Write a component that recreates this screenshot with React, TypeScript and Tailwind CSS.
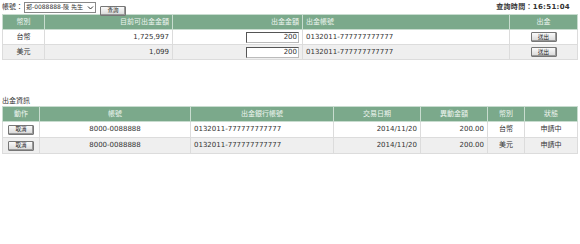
import React from "react";

const F = { fontFamily: '"DejaVu Sans", "Noto Sans CJK TC", sans-serif' };

function Btn({ label }: { label: string }) {
  return (
    <span className="inline-flex items-center justify-center w-[26px] h-[10px] border border-[#777] bg-gradient-to-b from-[#fafafa] to-[#d8d8d8] text-[5.5px] text-[#222] leading-none rounded-[1px] shadow-[inset_-1px_-1px_0_#999]">
      {label}
    </span>
  );
}

const th = "h-[15px] px-[3px] font-normal text-[7px] text-[#eef5f0] border border-[#c8dccf] bg-[#7ba98b]";
const td = "h-[15px] px-[3px] text-[7px] text-[#333] border border-[#dcdcdc]";

export default function App() {
  return (
    <div className="w-[580px] h-[244px] bg-white relative" style={F}>
      <div className="flex items-center h-[14px] px-[2px]">
        <span className="text-[7px] text-[#333]">帳號：</span>
        <span className="ml-[1px] flex items-center w-[72px] h-[11px] border border-[#888] bg-white text-[6px] text-[#333] leading-none pl-[1px]">
          <span className="flex-1 whitespace-nowrap overflow-hidden">郑-0088888-陳 先生</span>
          <svg width="7" height="7" viewBox="0 0 7 7" className="mr-[1px]">
            <path d="M1 2.5 L3.5 5 L6 2.5" stroke="#333" strokeWidth="1" fill="none" />
          </svg>
        </span>
        <span className="ml-[4px]">
          <Btn label="查詢" />
        </span>
        <span className="ml-auto mr-[8px] text-[7px] font-bold text-[#333] tracking-[0.3px]">查詢時間：16:51:04</span>
      </div>

      <table className="ml-[2px] w-[575px] table-fixed border-collapse">
        <colgroup>
          <col className="w-[42px]" />
          <col className="w-[128px]" />
          <col className="w-[130px]" />
          <col className="w-[207px]" />
          <col className="w-[68px]" />
        </colgroup>
        <thead>
          <tr>
            <th className={th + " text-center"}>幣別</th>
            <th className={th + " text-right"}>目前可出金金額</th>
            <th className={th + " text-right"}>出金金額</th>
            <th className={th + " text-left"}>出金帳號</th>
            <th className={th + " text-center"}>出金</th>
          </tr>
        </thead>
        <tbody>
          {[
            { c: "台幣", a: "1,725,997", bg: "bg-white" },
            { c: "美元", a: "1,099", bg: "bg-[#efefef]" },
          ].map((r) => (
            <tr key={r.c} className={r.bg}>
              <td className={td + " text-center"}>{r.c}</td>
              <td className={td + " text-right"}>{r.a}</td>
              <td className={td + " text-right"}>
                <span className="inline-block w-[53px] h-[11px] border border-[#555] border-r-[#bbb] border-b-[#bbb] bg-white text-right text-[7px] leading-[9px] pr-[1px] align-middle">
                  200
                </span>
              </td>
              <td className={td + " text-left"}>0132011-777777777777</td>
              <td className={td + " text-center"}>
                <Btn label="送出" />
              </td>
            </tr>
          ))}
        </tbody>
      </table>

      <div className="mt-[36px] ml-[2px] h-[10px] text-[7px] text-[#333] leading-[10px]">出金資訊</div>

      <table className="ml-[2px] w-[575px] table-fixed border-collapse">
        <colgroup>
          <col className="w-[37px]" />
          <col className="w-[151px]" />
          <col className="w-[143px]" />
          <col className="w-[87px]" />
          <col className="w-[67px]" />
          <col className="w-[37px]" />
          <col className="w-[53px]" />
        </colgroup>
        <thead>
          <tr>
            <th className={th + " text-center"}>動作</th>
            <th className={th + " text-center"}>帳號</th>
            <th className={th + " text-center"}>出金銀行帳號</th>
            <th className={th + " text-center"}>交易日期</th>
            <th className={th + " text-center"}>異動金額</th>
            <th className={th + " text-center"}>幣別</th>
            <th className={th + " text-center"}>狀態</th>
          </tr>
        </thead>
        <tbody>
          {[
            { c: "台幣", bg: "bg-white" },
            { c: "美元", bg: "bg-[#efefef]" },
          ].map((r) => (
            <tr key={r.c} className={r.bg}>
              <td className={td + " text-center h-[16px]"}>
                <Btn label="取消" />
              </td>
              <td className={td + " text-center"}>8000-0088888</td>
              <td className={td + " text-left"}>0132011-777777777777</td>
              <td className={td + " text-right"}>2014/11/20</td>
              <td className={td + " text-right"}>200.00</td>
              <td className={td + " text-center"}>{r.c}</td>
              <td className={td + " text-center"}>申請中</td>
            </tr>
          ))}
        </tbody>
      </table>
    </div>
  );
}
